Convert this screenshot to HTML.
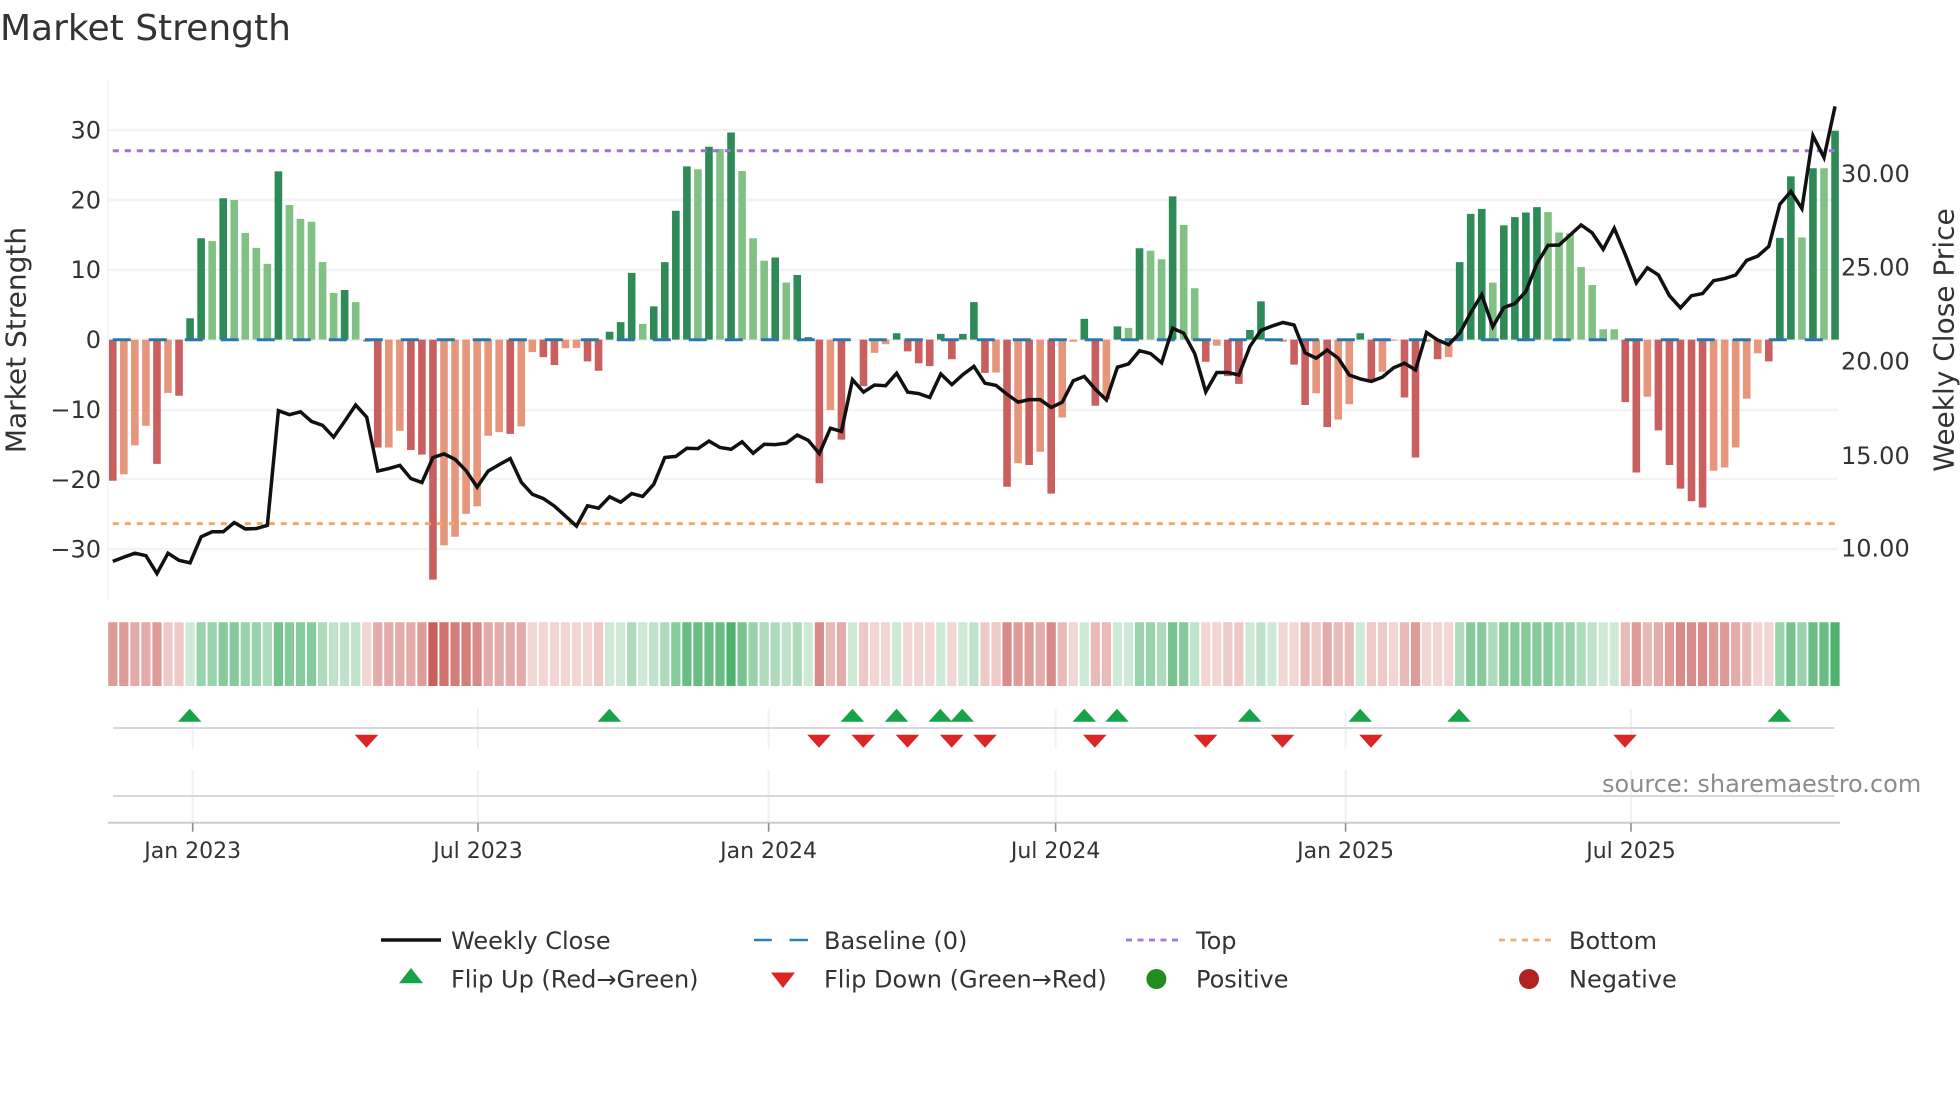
<!DOCTYPE html>
<html><head><meta charset="utf-8"><title>Market Strength</title>
<style>
html,body{margin:0;padding:0;background:#fff;width:1960px;height:1102px;overflow:hidden}
svg{display:block;position:absolute;left:0;top:0}
text{font-family:"DejaVu Sans","Liberation Sans",sans-serif;fill:#333}
.n{vector-effect:non-scaling-stroke;fill:none}
.b path{vector-effect:non-scaling-stroke;fill:none;stroke-width:7.6}
.s path{vector-effect:non-scaling-stroke;fill:none;stroke-width:9.2}
</style></head><body>
<svg width="1960" height="1102" viewBox="0 0 1960 1102" xmlns="http://www.w3.org/2000/svg">
<text x="0" y="40" font-size="36" fill="#333">Market Strength</text>

<!-- grid -->
<path d="M108 80V599" stroke="#f5f5f7" stroke-width="2" fill="none"/>
<path d="M108 130H1838M108 200H1838M108 270H1838M108 340H1838M108 410H1838M108 479H1838M108 549H1838" stroke="#f2f3f5" stroke-width="2.4" fill="none"/>

<!-- bars -->
<g class="b" transform="translate(112.8,60) scale(11.04,.35714)">
<path stroke="#c95f5f" d="M0 783V1178M4 783V1131M6 783V940M24 783V1085M27 783V1092M28 783V1105M29 783V1455M36 783V1047M39 783V832M40 783V854M43 783V844M44 783V870M64 783V1185M66 783V1063M68 783V913M72 783V816M73 783V849M74 783V857M76 783V838M79 783V876M81 783V1195M83 783V1134M85 783V1214M89 783V968M99 783V845M101 783V885M102 783V907M107 783V853M108 783V966M110 783V1028M114 783V897M117 783V945M118 783V1113M120 783V838M137 783V958M138 783V1155M140 783V1037M141 783V1134M142 783V1200M143 783V1235M144 783V1253M150 783V844"/>
<path stroke="#e6967a" d="M1 783V1160M2 783V1079M3 783V1024M5 783V932M23 783V789M25 783V1085M26 783V1038M30 783V1359M31 783V1335M32 783V1271M33 783V1250M34 783V1052M35 783V1042M37 783V1026M38 783V818M41 783V807M42 783V806M65 783V980M69 783V820M70 783V796M80 783V875M82 783V1129M84 783V1097M86 783V1001M87 783V789M90 783V950M100 783V800M106 783V789M109 783V933M111 783V1007M112 783V964M115 783V873M116 783V786M119 783V789M121 783V832M139 783V943M145 783V1150M146 783V1141M147 783V1085M148 783V948M149 783V821"/>
<path stroke="#2e8b57" d="M7 783V723M8 783V499M10 783V387M15 783V312M21 783V644M45 783V761M46 783V734M47 783V596M49 783V690M50 783V566M51 783V422M52 783V298M54 783V243M56 783V203M60 783V553M62 783V602M63 783V776M71 783V765M75 783V767M77 783V767M78 783V678M88 783V725M91 783V746M93 783V527M96 783V382M103 783V756M104 783V676M113 783V765M122 783V566M123 783V431M124 783V417M126 783V463M127 783V440M128 783V427M129 783V412M151 783V498M152 783V326M154 783V303M156 783V198"/>
<path stroke="#81c184" d="M9 783V507M11 783V392M12 783V484M13 783V526M14 783V571M16 783V406M17 783V445M18 783V453M19 783V566M20 783V652M22 783V678M48 783V739M53 783V306M55 783V249M57 783V311M58 783V499M59 783V562M61 783V623M92 783V750M94 783V534M95 783V558M97 783V462M98 783V639M125 783V623M130 783V426M131 783V483M132 783V485M133 783V580M134 783V630M135 783V754M136 783V754M153 783V497M155 783V303"/>
</g>

<!-- baseline / top / bottom -->
<path d="M112.8 339.8H1835" stroke="#2a78aa" stroke-width="3" stroke-dasharray="18 18" fill="none"/>
<path d="M112.8 150.7H1835" stroke="#9a74d8" stroke-width="3" stroke-dasharray="6 6" fill="none"/>
<path d="M112.8 523.6H1835" stroke="#f2a766" stroke-width="3" stroke-dasharray="6 6" fill="none"/>

<!-- weekly close -->
<g transform="translate(112.8,60) scale(11.04,.35714)">
<polyline class="n" stroke="#111" stroke-width="3.5" stroke-linejoin="miter" points="0,1404 1,1392 2,1381 3,1388 4,1438 5,1381 6,1401 7,1408 8,1335 9,1321 10,1321 11,1295 12,1313 13,1312 14,1303 15,982 16,993 17,985 18,1012 19,1023 20,1056 21,1012 22,966 23,1000 24,1151 25,1144 26,1135 27,1172 28,1183 29,1113 30,1103 31,1118 32,1150 33,1196 34,1151 35,1133 36,1116 37,1182 38,1216 39,1228 40,1249 41,1277 42,1305 43,1248 44,1255 45,1223 46,1238 47,1214 48,1222 49,1188 50,1113 51,1110 52,1087 53,1088 54,1067 55,1085 56,1090 57,1069 58,1101 59,1076 60,1077 61,1073 62,1050 63,1065 64,1102 65,1031 66,1040 67,895 68,930 69,910 70,912 71,877 72,930 73,934 74,945 75,879 76,909 77,881 78,858 79,905 80,911 81,936 82,958 83,951 84,951 85,973 86,958 87,898 88,886 89,922 90,952 91,860 92,851 93,814 94,822 95,848 96,751 97,765 98,822 99,929 100,875 101,875 102,882 103,802 104,757 105,745 106,735 107,742 108,820 109,835 110,812 111,835 112,882 113,893 114,900 115,888 116,862 117,849 118,868 119,763 120,784 121,797 122,765 123,708 124,657 125,747 126,693 127,682 128,648 129,570 130,519 131,518 132,490 133,462 134,484 135,530 136,471 137,545 138,624 139,582 140,602 141,660 142,694 143,660 144,654 145,618 146,612 147,602 148,561 149,549 150,522 151,404 152,368 153,416 154,212 155,273 156,130"/>
</g>

<!-- y ticks left -->
<g font-size="24" text-anchor="end">
<text x="101" y="138.7">30</text><text x="101" y="208.7">20</text><text x="101" y="278.2">10</text><text x="101" y="348.2">0</text>
<text x="101" y="418.2">−10</text><text x="101" y="488">−20</text><text x="101" y="557.7">−30</text>
</g>
<!-- y ticks right -->
<g font-size="24">
<text x="1841" y="182">30.00</text><text x="1841" y="275.5">25.00</text><text x="1841" y="369.5">20.00</text><text x="1841" y="464">15.00</text><text x="1841" y="556.5">10.00</text>
</g>
<text transform="translate(25.5,340) rotate(-90)" font-size="28" text-anchor="middle">Market Strength</text>
<text transform="translate(1953.5,340) rotate(-90)" font-size="28" text-anchor="middle">Weekly Close Price</text>

<!-- strip -->
<g class="s" transform="translate(112.8,622.3) scale(11.04,63.7)">
<g fill="none">
<path stroke="rgb(200,90,85)" stroke-opacity=".25" d="M23 0V1M38 0V1M39 0V1M40 0V1M41 0V1M42 0V1M43 0V1M69 0V1M70 0V1M72 0V1M73 0V1M74 0V1M76 0V1M87 0V1M99 0V1M100 0V1M106 0V1M107 0V1M116 0V1M119 0V1M120 0V1M121 0V1M149 0V1M150 0V1"/>
<path stroke="rgb(200,90,85)" stroke-opacity=".33" d="M5 0V1M6 0V1M44 0V1M68 0V1M79 0V1M80 0V1M101 0V1M102 0V1M109 0V1M114 0V1M115 0V1"/>
<path stroke="rgb(200,90,85)" stroke-opacity=".42" d="M65 0V1M86 0V1M89 0V1M90 0V1M108 0V1M111 0V1M112 0V1M117 0V1M137 0V1M139 0V1M148 0V1"/>
<path stroke="rgb(200,90,85)" stroke-opacity=".5" d="M2 0V1M3 0V1M24 0V1M25 0V1M26 0V1M27 0V1M34 0V1M35 0V1M36 0V1M37 0V1M66 0V1M84 0V1M110 0V1M140 0V1M147 0V1"/>
<path stroke="rgb(200,90,85)" stroke-opacity=".6" d="M0 0V1M1 0V1M4 0V1M28 0V1M82 0V1M83 0V1M118 0V1M138 0V1M141 0V1M145 0V1M146 0V1"/>
<path stroke="rgb(200,90,85)" stroke-opacity=".7" d="M33 0V1M64 0V1M81 0V1M85 0V1M142 0V1M143 0V1M144 0V1"/>
<path stroke="rgb(200,90,85)" stroke-opacity=".78" d="M31 0V1M32 0V1"/>
<path stroke="rgb(200,90,85)" stroke-opacity=".86" d="M30 0V1"/>
<path stroke="rgb(200,90,85)" stroke-opacity=".97" d="M29 0V1"/>
<path stroke="rgb(60,170,95)" stroke-opacity=".25" d="M7 0V1M45 0V1M46 0V1M48 0V1M63 0V1M67 0V1M71 0V1M75 0V1M77 0V1M88 0V1M91 0V1M92 0V1M103 0V1M105 0V1M113 0V1M135 0V1M136 0V1"/>
<path stroke="rgb(60,170,95)" stroke-opacity=".33" d="M20 0V1M21 0V1M22 0V1M49 0V1M61 0V1M78 0V1M98 0V1M104 0V1M134 0V1"/>
<path stroke="rgb(60,170,95)" stroke-opacity=".42" d="M14 0V1M19 0V1M47 0V1M50 0V1M59 0V1M60 0V1M62 0V1M95 0V1M122 0V1M125 0V1M133 0V1"/>
<path stroke="rgb(60,170,95)" stroke-opacity=".52" d="M8 0V1M9 0V1M12 0V1M13 0V1M58 0V1M93 0V1M94 0V1M131 0V1M132 0V1M151 0V1M153 0V1"/>
<path stroke="rgb(60,170,95)" stroke-opacity=".62" d="M10 0V1M11 0V1M16 0V1M17 0V1M18 0V1M51 0V1M97 0V1M123 0V1M124 0V1M126 0V1M127 0V1M128 0V1M129 0V1M130 0V1"/>
<path stroke="rgb(60,170,95)" stroke-opacity=".7" d="M15 0V1M57 0V1M96 0V1M152 0V1"/>
<path stroke="rgb(60,170,95)" stroke-opacity=".78" d="M52 0V1M53 0V1M54 0V1M55 0V1M154 0V1M155 0V1"/>
<path stroke="rgb(60,170,95)" stroke-opacity=".9" d="M56 0V1M156 0V1"/>
</g></g>

<!-- lower panels -->
<path d="M192.7 709V748M192.7 770V823M478 709V748M478 770V823M768.6 709V748M768.6 770V823M1055.6 709V748M1055.6 770V823M1345.6 709V748M1345.6 770V823M1631 709V748M1631 770V823" stroke="#f0f1f4" stroke-width="2" fill="none"/>
<path d="M113 728H1834.5M113 796H1834.5" stroke="#d6d8db" stroke-width="2" fill="none"/>
<path d="M108 822.7H1840" stroke="#cbcdd0" stroke-width="2" fill="none"/>
<path d="M192.7 823V831.7M478 823V831.7M768.6 823V831.7M1055.6 823V831.7M1345.6 823V831.7M1631 823V831.7" stroke="#8e8e8e" stroke-width="1.6" fill="none"/>

<!-- flips -->
<g fill="#16a34a">
<path d="M189.7 708.7l11.8 13h-23.6z"/><path d="M609.4 708.7l11.8 13h-23.6z"/><path d="M852.4 708.7l11.8 13h-23.6z"/><path d="M896.5 708.7l11.8 13h-23.6z"/><path d="M940.3 708.7l11.8 13h-23.6z"/><path d="M962.2 708.7l11.8 13h-23.6z"/><path d="M1084.3 708.7l11.8 13h-23.6z"/><path d="M1117 708.7l11.8 13h-23.6z"/><path d="M1249.7 708.7l11.8 13h-23.6z"/><path d="M1360.2 708.7l11.8 13h-23.6z"/><path d="M1459 708.7l11.8 13h-23.6z"/><path d="M1779.4 708.7l11.8 13h-23.6z"/>
</g>
<g fill="#dc2626">
<path d="M366.5 747.7l-11.8-13h23.6z"/><path d="M819 747.7l-11.8-13h23.6z"/><path d="M863.3 747.7l-11.8-13h23.6z"/><path d="M907.5 747.7l-11.8-13h23.6z"/><path d="M951.7 747.7l-11.8-13h23.6z"/><path d="M985 747.7l-11.8-13h23.6z"/><path d="M1094.8 747.7l-11.8-13h23.6z"/><path d="M1205.5 747.7l-11.8-13h23.6z"/><path d="M1282.5 747.7l-11.8-13h23.6z"/><path d="M1371 747.7l-11.8-13h23.6z"/><path d="M1625 747.7l-11.8-13h23.6z"/>
</g>

<!-- x ticks -->
<g font-size="22" text-anchor="middle">
<text x="192.7" y="858">Jan 2023</text><text x="478" y="858">Jul 2023</text><text x="768.6" y="858">Jan 2024</text><text x="1055.6" y="858">Jul 2024</text><text x="1345.6" y="858">Jan 2025</text><text x="1631" y="858">Jul 2025</text>
</g>
<text x="1602" y="792" font-size="24" style="fill:#8c8c8c">source: sharemaestro.com</text>

<!-- legend -->
<path d="M381 940H441" stroke="#111" stroke-width="3.4" fill="none"/>
<path d="M754 940H771.8M789.5 940H808" stroke="#2f80b7" stroke-width="2.6" fill="none"/>
<path d="M1126 940H1182" stroke="#a076e0" stroke-width="2.8" stroke-dasharray="6 5.5" fill="none"/>
<path d="M1499 940H1555" stroke="#f0ae78" stroke-width="2.8" stroke-dasharray="6 5.5" fill="none"/>
<path d="M411 968l12 15.300h-24z" fill="#16a34a"/>
<path d="M783 988l-12-15.500h24z" fill="#dc2626"/>
<circle cx="1156.400" cy="979" r="10" fill="#228b22"/>
<circle cx="1529" cy="979" r="10" fill="#b22222"/>
<g font-size="24">
<text x="451" y="949">Weekly Close</text><text x="824" y="949">Baseline (0)</text><text x="1196" y="949">Top</text><text x="1569" y="949">Bottom</text>
<text x="451" y="987.500">Flip Up (Red→Green)</text><text x="824" y="987.500">Flip Down (Green→Red)</text><text x="1196" y="987.500">Positive</text><text x="1569" y="987.500">Negative</text>
</g>
</svg>
</body></html>
